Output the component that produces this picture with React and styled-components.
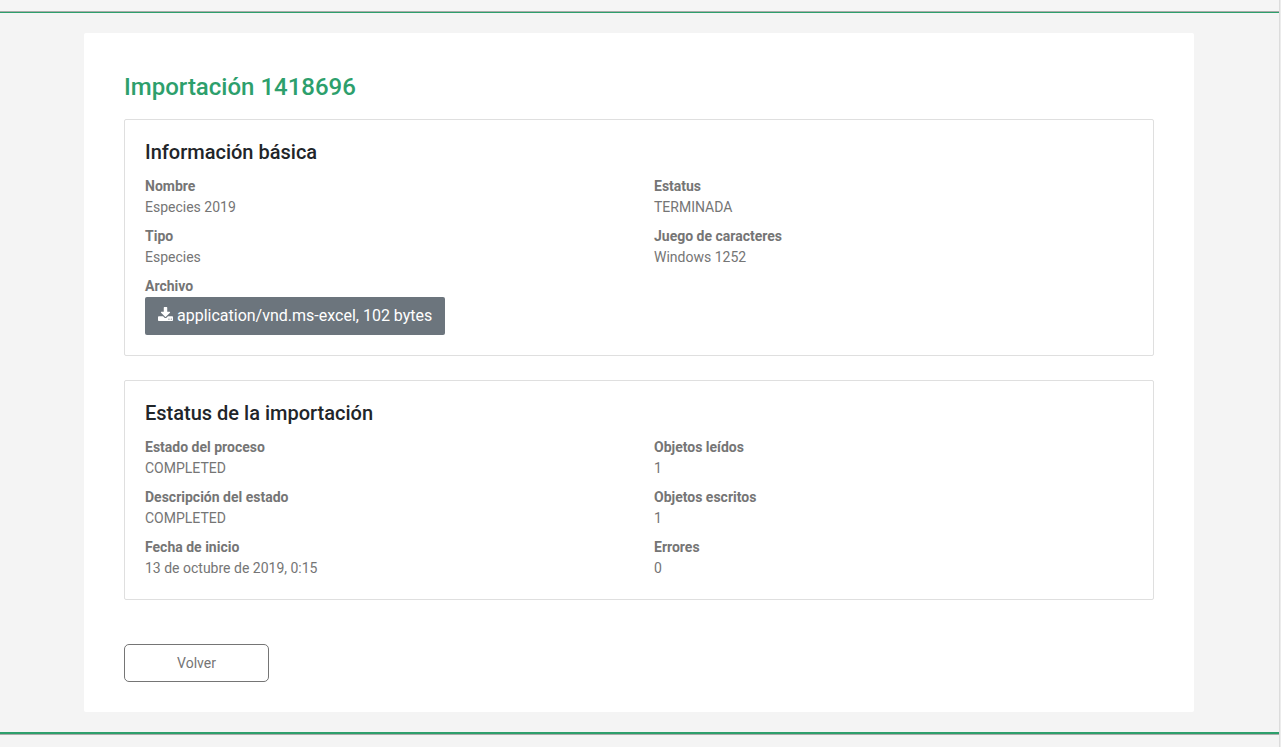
import React from 'react';
import styled, { createGlobalStyle } from 'styled-components';

const basicInfo = [
  { label: 'Nombre', value: 'Especies 2019' },
  { label: 'Estatus', value: 'TERMINADA' },
  { label: 'Tipo', value: 'Especies' },
  { label: 'Juego de caracteres', value: 'Windows 1252' },
];

const importStatus = [
  { label: 'Estado del proceso', value: 'COMPLETED' },
  { label: 'Objetos leídos', value: '1' },
  { label: 'Descripción del estado', value: 'COMPLETED' },
  { label: 'Objetos escritos', value: '1' },
  { label: 'Fecha de inicio', value: '13 de octubre de 2019, 0:15' },
  { label: 'Errores', value: '0' },
];

function DownloadIcon() {
  return (
    <svg width="15" height="14" viewBox="0 0 1664 1536" fill="currentColor">
      <path d="M1280 1344q0-26-19-45t-45-19-45 19-19 45 19 45 45 19 45-19 19-45zm256 0q0-26-19-45t-45-19-45 19-19 45 19 45 45 19 45-19 19-45zm128-224v320q0 40-28 68t-68 28h-1472q-40 0-68-28t-28-68v-320q0-40 28-68t68-28h465l135 136q58 56 136 56t136-56l136-136h464q40 0 68 28t28 68zm-325-569q17 41-14 70l-448 448q-18 19-45 19t-45-19l-448-448q-31-29-14-70 17-39 59-39h256v-448q0-26 19-45t45-19h256q26 0 45 19t19 45v448h256q42 0 59 39z" />
    </svg>
  );
}

function Field({ label, children }) {
  return (
    <div>
      <Label>{label}</Label>
      {children}
    </div>
  );
}

function FieldList({ fields, children }) {
  return (
    <Fields>
      {fields.map((field) => (
        <Field key={field.label} label={field.label}>
          <Value>{field.value}</Value>
        </Field>
      ))}
      {children}
    </Fields>
  );
}

function App() {
  return (
    <>
      <GlobalStyle />
      <Page>
        <Header />
        <Container>
          <Title>Importación 1418696</Title>
          <Card>
            <CardTitle>Información básica</CardTitle>
            <FieldList fields={basicInfo}>
              <Field label="Archivo">
                <DownloadButton type="button">
                  <DownloadIcon />
                  application/vnd.ms-excel, 102 bytes
                </DownloadButton>
              </Field>
            </FieldList>
          </Card>
          <Card>
            <CardTitle>Estatus de la importación</CardTitle>
            <FieldList fields={importStatus} />
          </Card>
          <BackButton type="button">Volver</BackButton>
        </Container>
        <Footer />
      </Page>
    </>
  );
}

const GlobalStyle = createGlobalStyle`
  * {
    box-sizing: border-box;
  }
  body {
    margin: 0;
    background: #ececec;
    color: #757575;
    font-family: Roboto, sans-serif;
    font-size: 14px;
    line-height: 21px;
  }
`;

const Page = styled.div`
  height: 747px;
  margin-right: 1px;
  overflow: hidden;
  border-right: 1px solid #dcdcdc;
  background: #f4f4f4;
`;

const Header = styled.header`
  height: 13px;
  border-bottom: 1px solid #2d9f6c;
  background: #f5f5f5;
  box-shadow: inset 0 -1px 0 #a9aba9;
`;

const Container = styled.main`
  width: 1110px;
  height: 679px;
  margin: 20px 0 20px 84px;
  padding: 40px;
  background: #fff;
  border-radius: 2px;
`;

const Title = styled.h1`
  margin: 0 0 17px;
  color: #2d9f6c;
  font-size: 24px;
  font-weight: 500;
  line-height: 29px;
`;

const Card = styled.section`
  margin-bottom: 24px;
  padding: 20px;
  border: 1px solid #dfdfdf;
  border-radius: 2px;
`;

const CardTitle = styled.h2`
  margin: 0 0 12px;
  color: #212529;
  font-size: 20px;
  font-weight: 500;
  line-height: 24px;
`;

const Fields = styled.div`
  display: grid;
  grid-template-columns: 1fr 1fr;
  gap: 8px 30px;
`;

const Label = styled.div`
  font-weight: 700;
`;

const Value = styled.div`
  font-weight: 400;
`;

const DownloadButton = styled.button`
  display: flex;
  align-items: center;
  gap: 4px;
  height: 38px;
  padding: 0 13px 2px;
  border: 0;
  border-radius: 2px;
  background: #6c757d;
  color: #fff;
  font-family: inherit;
  font-size: 16px;
  white-space: nowrap;

  & svg {
    margin-bottom: 2px;
  }
`;

const BackButton = styled.button`
  display: block;
  width: 145px;
  height: 38px;
  margin-top: 44px;
  border: 1px solid #757575;
  border-radius: 5px;
  background: #fff;
  color: #757575;
  font-family: inherit;
  font-size: 14px;
`;

const Footer = styled.footer`
  height: 15px;
  border-top: 2px solid #2d9f6c;
  box-shadow: inset 0 1px 0 #a9aba9;
`;

export default App;
